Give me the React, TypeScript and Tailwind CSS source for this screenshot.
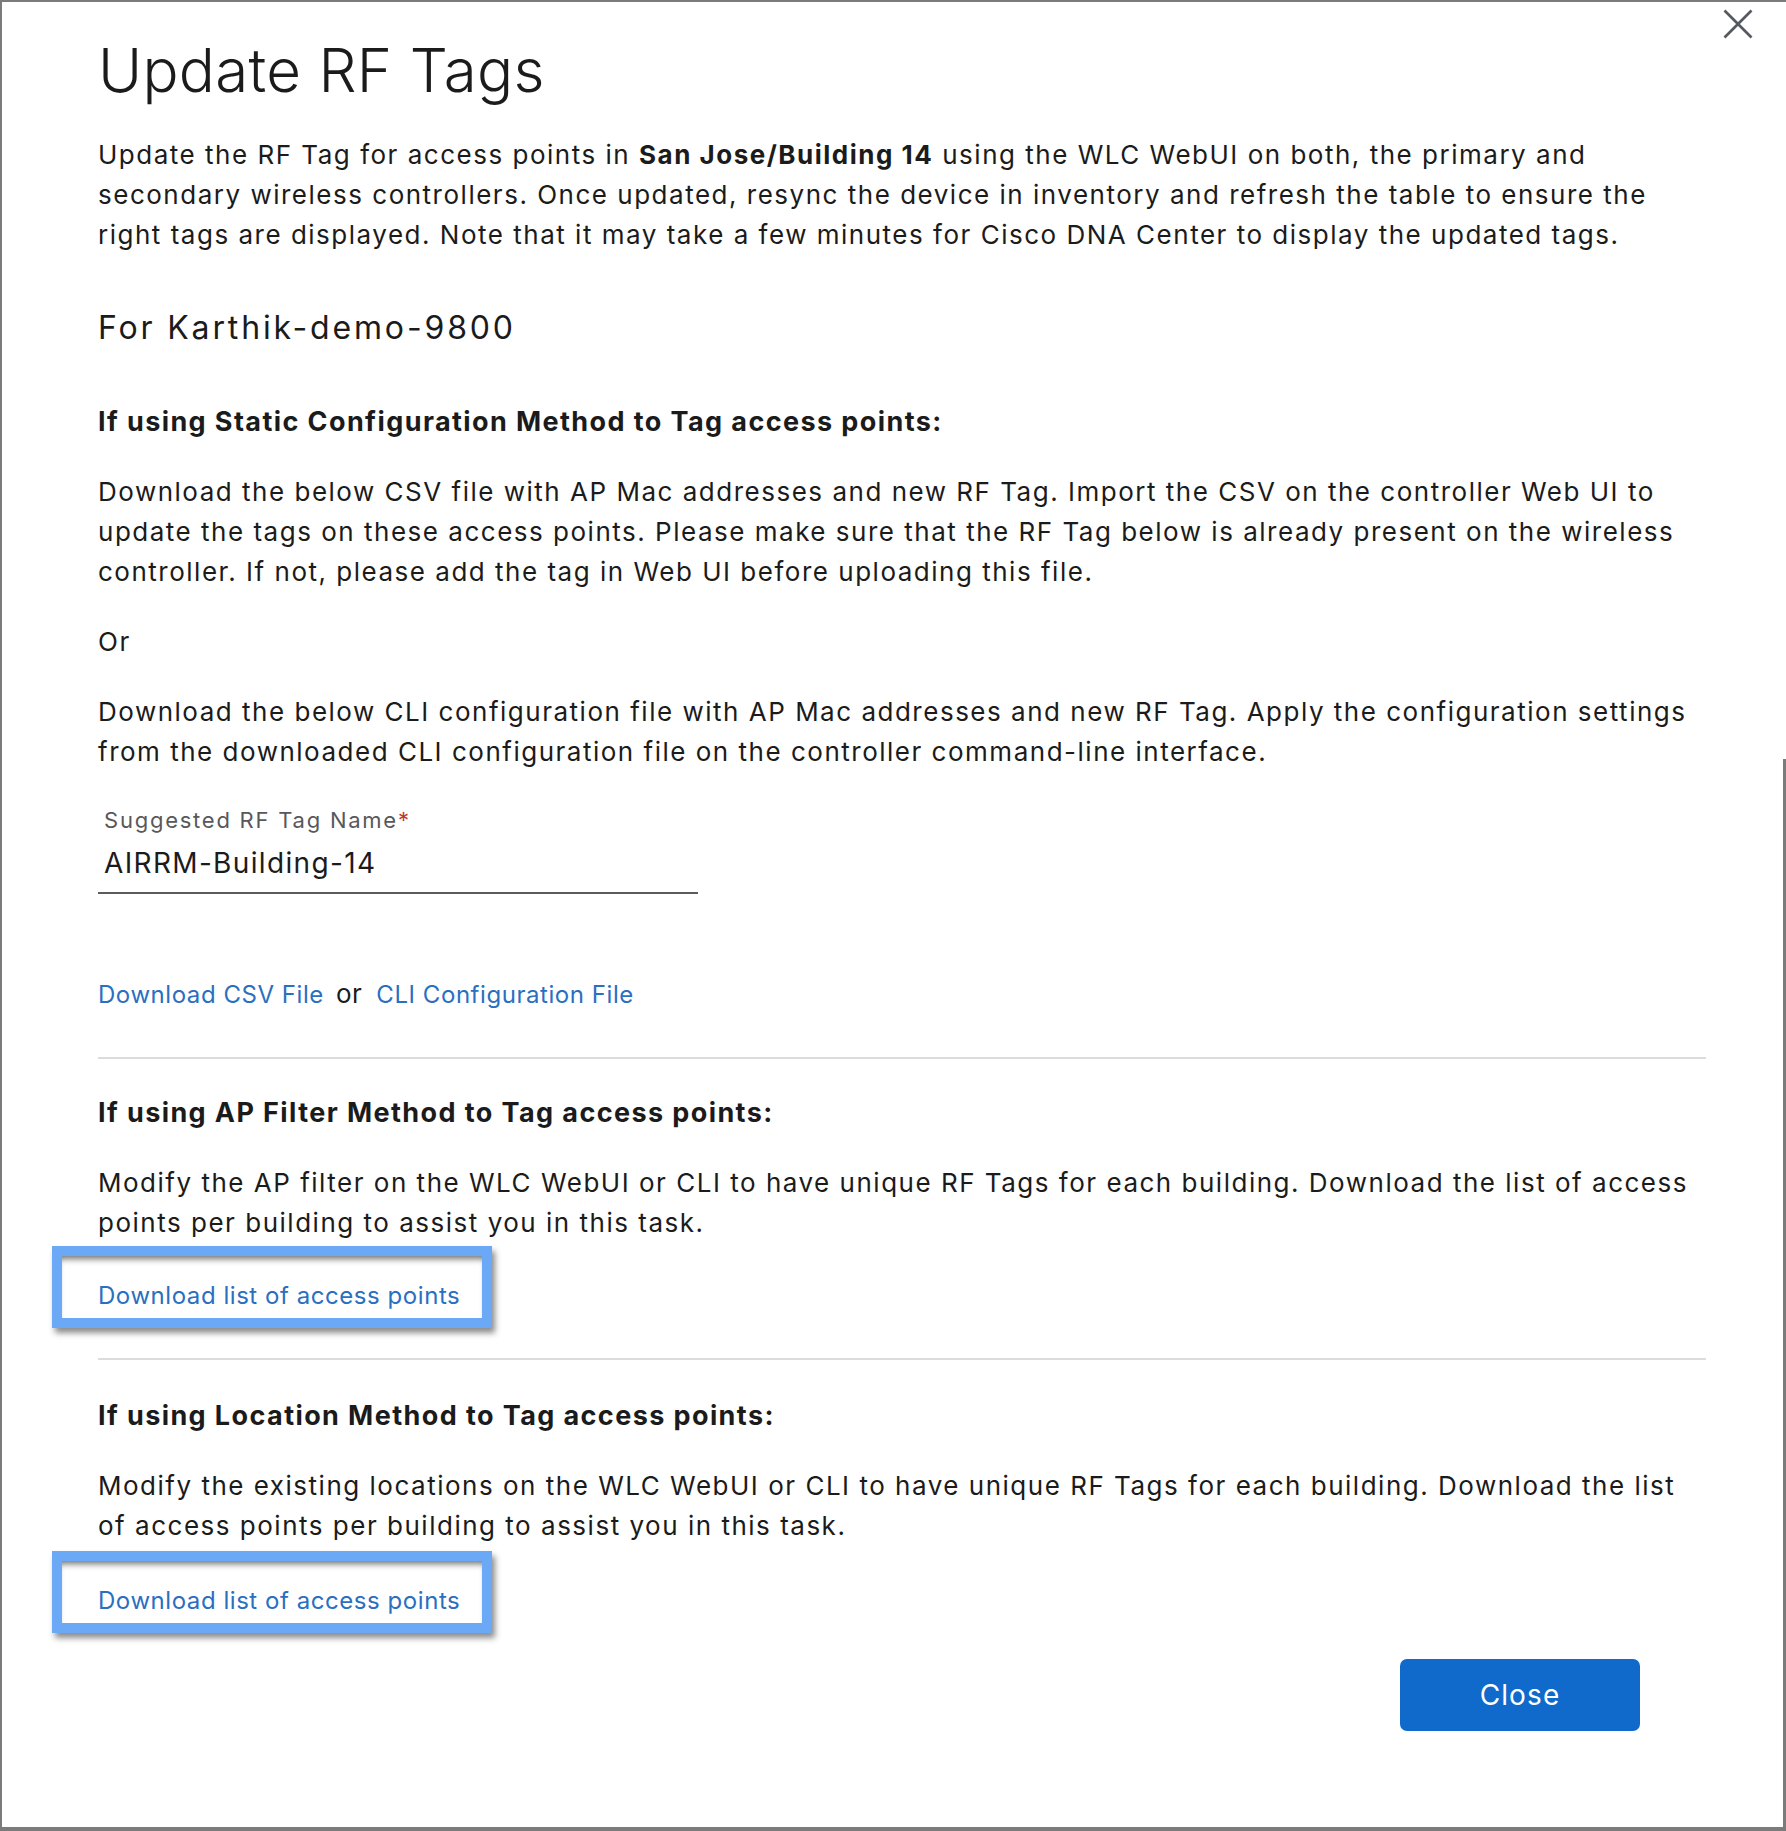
const linkCls = "text-[#2a6fc0] cursor-pointer";

function Heading({ children, className = "" }: { children: React.ReactNode; className?: string }) {
  return (
    <h3 className={`text-[27px] leading-[40px] font-bold text-[#1b1b1b] tracking-[0.052em] ${className}`}>
      {children}
    </h3>
  );
}

function Para({ children, className = "" }: { children: React.ReactNode; className?: string }) {
  return (
    <p className={`text-[26px] leading-[40px] text-[#1b1b1b] tracking-[0.058em] ${className}`}>{children}</p>
  );
}

function HighlightLink({ className = "" }: { className?: string }) {
  return (
    <div
      className={`ml-[-46px] w-[440px] h-[82px] border-[10px] border-[#6ba8f5] bg-white pl-[36px] pt-[20px] shadow-[inset_0_7px_6px_-4px_rgba(0,0,0,0.55),3px_5px_6px_rgba(0,0,0,0.45)] ${className}`}
    >
      <a className={`${linkCls} block text-[24px] leading-[40px] tracking-[0.023em]`}>
        Download list of access points
      </a>
    </div>
  );
}

export default function App() {
  return (
    <div
      className="relative w-[1786px] h-[1831px] bg-white border-t-2 border-l-2 border-b-4 border-[#7b7b7b] overflow-hidden"
      style={{ fontFamily: "Inter, 'Noto Sans', sans-serif" }}
    >
      {/* right frame edge, only on the lower part */}
      <div className="absolute right-0 top-[757px] bottom-0 w-[3px] bg-[#7b7b7b]" />

      {/* close icon */}
      <button className="absolute right-[33px] top-[7px]">
        <svg width="30" height="30" viewBox="0 0 30 30" fill="none" stroke="#555a60" strokeWidth="2.6">
          <line x1="1.5" y1="1.5" x2="28.5" y2="28.5" />
          <line x1="28.5" y1="1.5" x2="1.5" y2="28.5" />
        </svg>
      </button>

      <div className="pl-[96px] pr-[80px]">
        <h1 className="mt-[32px] text-[60px] leading-[72px] font-light text-[#1b1b1b] tracking-[0.005em]">
          Update RF Tags
        </h1>

        <Para className="mt-[29px]">
          Update the RF Tag for access points in <b className="font-bold">San Jose/Building 14</b> using the WLC
          WebUI on both, the primary and
          <br />
          secondary wireless controllers. Once updated, resync the device in inventory and refresh the table to
          ensure the
          <br />
          right tags are displayed. Note that it may take a few minutes for Cisco DNA Center to display the updated
          tags.
        </Para>

        <h2 className="mt-[53px] text-[32px] leading-[40px] text-[#1b1b1b] tracking-[0.089em]">
          For Karthik-demo-9800
        </h2>

        <Heading className="mt-[54px]">If using Static Configuration Method to Tag access points:</Heading>

        <Para className="mt-[30px]">
          Download the below CSV file with AP Mac addresses and new RF Tag. Import the CSV on the controller Web UI
          to
          <br />
          update the tags on these access points. Please make sure that the RF Tag below is already present on the
          wireless
          <br />
          controller. If not, please add the tag in Web UI before uploading this file.
        </Para>

        <Para className="mt-[30px]">Or</Para>

        <Para className="mt-[30px]">
          Download the below CLI configuration file with AP Mac addresses and new RF Tag. Apply the configuration
          settings
          <br />
          from the downloaded CLI configuration file on the controller command-line interface.
        </Para>

        {/* suggested tag name field */}
        <div className="mt-[33px] w-[600px] border-b-2 border-[#5c5c60] pb-[11px]">
          <label className="block pl-[6px] text-[22px] leading-[30px] text-[#58585b] tracking-[0.08em]">
            Suggested RF Tag Name<span className="text-[#c0392b]">*</span>
          </label>
          <div className="mt-[10px] pl-[6px] text-[28px] leading-[36px] text-[#1b1b1b] tracking-[0.048em]">
            AIRRM-Building-14
          </div>
        </div>

        <div className="mt-[80px] text-[24px] leading-[40px] tracking-[0.023em]">
          <a className={linkCls}>Download CSV File</a>
          <span className="ml-[12px] mr-[14px] text-[26px] text-[#1b1b1b]">or</span>
          <a className={linkCls}>CLI Configuration File</a>
        </div>

        <div className="mt-[42px] h-[2px] w-[1608px] bg-[#dcdcdc]" />

        <Heading className="mt-[34px]">If using AP Filter Method to Tag access points:</Heading>

        <Para className="mt-[30px]">
          Modify the AP filter on the WLC WebUI or CLI to have unique RF Tags for each building. Download the list
          of access
          <br />
          points per building to assist you in this task.
        </Para>

        <HighlightLink className="mt-[3px]" />

        <div className="mt-[30px] h-[2px] w-[1608px] bg-[#dcdcdc]" />

        <Heading className="mt-[36px]">If using Location Method to Tag access points:</Heading>

        <Para className="mt-[30px]">
          Modify the existing locations on the WLC WebUI or CLI to have unique RF Tags for each building. Download
          the list
          <br />
          of access points per building to assist you in this task.
        </Para>

        <HighlightLink className="mt-[5px]" />

        <div className="flex justify-end pr-[66px] mt-[26px]">
          <button className="w-[240px] h-[72px] rounded-[7px] bg-[#0f6acb] text-white text-[28px] tracking-[0.04em]">
            Close
          </button>
        </div>
      </div>
    </div>
  );
}
